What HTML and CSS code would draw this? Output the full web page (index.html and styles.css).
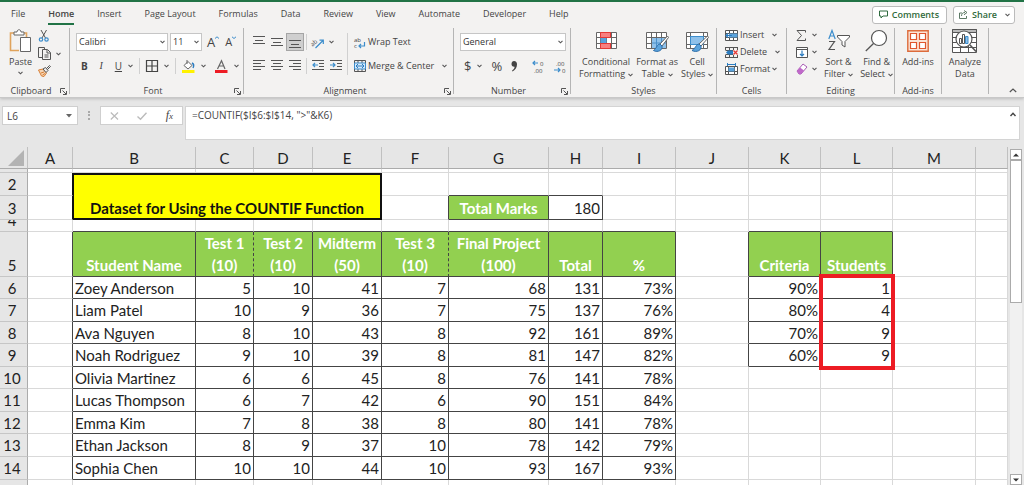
FILE: index.html
```html
<!DOCTYPE html>
<html lang="en">
<head>
<meta charset="utf-8">
<title>Spreadsheet - COUNTIF dataset</title>
<link rel="stylesheet" href="styles.css">
</head>
<body>
<svg class="defs" width="0" height="0" aria-hidden="true">
  <symbol id="chev" viewBox="0 0 5 4"><path d="M.5 .8L2.500 2.800L4.500 .8" fill="none" stroke="#555" stroke-width="1.100"/></symbol>
  <symbol id="launch" viewBox="0 0 7 7"><path d="M.5 5V.5H5M2.500 2.500L6 6M6.500 3V6.500H3" fill="none" stroke="#555"/></symbol>
</svg>

<header class="ribbon">
  <nav class="tabs">
    <button class="tab">File</button>
    <button class="tab active">Home</button>
    <button class="tab">Insert</button>
    <button class="tab">Page Layout</button>
    <button class="tab">Formulas</button>
    <button class="tab">Data</button>
    <button class="tab">Review</button>
    <button class="tab">View</button>
    <button class="tab">Automate</button>
    <button class="tab">Developer</button>
    <button class="tab">Help</button>
    <span class="grow"></span>
    <button class="pill"><svg width="9" height="9" viewBox="0 0 9 9"><path d="M.5 1H8.500V6H4L2 8V6H.5Z" fill="none" stroke="#2f6b3f"/></svg>Comments</button>
    <button class="pill share"><svg width="9" height="9" viewBox="0 0 9 9"><path d="M3 3H.5V8.500H7.500V6M2.500 6C2.500 3.500 4 2.500 6 2.500M5 .5L8 2.500L5 4.800" fill="none" stroke="#4c6b55" stroke-width=".9"/></svg>Share<svg class="chev"><use href="#chev"/></svg></button>
  </nav>

  <div class="groups">
    <section class="group clipboard">
      <div class="body">
        <button class="big paste">
          <svg width="22" height="24" viewBox="0 0 22 24"><path d="M6 4H1.500V21.500H10M15 4H17.500V8" fill="none" stroke="#e0a35c" stroke-width="1.600"/><path d="M5 6V3H8C8 0 12 0 12 3H15V6Z" fill="#fff" stroke="#666"/><path d="M11.500 8.500H21.500V22.500H11.500Z" fill="#fff" stroke="#666"/></svg>
          <span>Paste</span><svg class="chev"><use href="#chev"/></svg>
        </button>
        <div class="stack">
          <button aria-label="Cut"><svg width="12" height="12" viewBox="0 0 12 12"><path d="M3 0L7.500 8M8.500 0L4 8" stroke="#555" fill="none"/><circle cx="3" cy="9.500" r="1.700" fill="none" stroke="#3c8dcc" stroke-width="1.200"/><circle cx="8.500" cy="9.500" r="1.700" fill="none" stroke="#3c8dcc" stroke-width="1.200"/></svg></button>
          <button aria-label="Copy"><svg width="14" height="13" viewBox="0 0 14 13"><path d="M4 10.500H.5V.5H6.500V2M4.500 2.500H9.500L12.500 5.500V12.500H4.500ZM9 3V6H12M6.500 8H10.500M6.500 10H10.500" fill="none" stroke="#555"/></svg><svg class="chev"><use href="#chev"/></svg></button>
          <button aria-label="Format painter"><svg width="13" height="12" viewBox="0 0 13 12"><path d="M.5 5L5 4L8.500 8L6 11.500L3.500 11Z" fill="#f5d5b5" stroke="#d98035"/><path d="M3 8L6 7M4.500 10L7 8.500" stroke="#d98035"/><path d="M5 4L7.500 2.500L10 5.500L8 7.500ZM8.500 3.500L11.500 .5L12.500 1.500L9.500 4.500" fill="#eee" stroke="#555"/></svg></button>
        </div>
      </div>
      <footer><span>Clipboard</span><svg class="launch"><use href="#launch"/></svg></footer>
    </section>

    <section class="group font">
      <div class="body rows">
        <div class="row r1">
          <label class="drop face"><select aria-label="Font"><option>Calibri</option></select><svg class="chev"><use href="#chev"/></svg></label>
          <label class="drop size"><select aria-label="Font size"><option>11</option></select><svg class="chev"><use href="#chev"/></svg></label>
          <button class="letter" aria-label="Increase font size">A<svg width="4" height="9" viewBox="0 0 4 9"><path d="M0 2.500L2 .8L4 2.500" fill="none" stroke="#3c8dcc"/></svg></button>
          <button class="letter less" aria-label="Decrease font size">A<svg width="4" height="9" viewBox="0 0 4 9"><path d="M0 .8L2 2.500L4 .8" fill="none" stroke="#3c8dcc"/></svg></button>
        </div>
        <div class="row r2">
          <button class="mark"><b>B</b></button>
          <button class="mark"><i>I</i></button>
          <button class="mark"><u>U</u><svg class="chev"><use href="#chev"/></svg></button>
          <span class="sep"></span>
          <button aria-label="Borders"><svg width="12" height="12" viewBox="0 0 12 12"><path d="M.5 .5H11.500V11.500H.5ZM6 0V12M0 6H12" fill="none" stroke="#444" stroke-width="1.200"/></svg><svg class="chev"><use href="#chev"/></svg></button>
          <span class="sep"></span>
          <button aria-label="Fill color"><svg width="13" height="13" viewBox="0 0 13 13"><path d="M2 5.500L6 1.500L10 5.500L6 9Z" fill="#fff" stroke="#666"/><path d="M5 0V4" stroke="#666"/><path d="M10 3C12 4 12 6 11 8" fill="none" stroke="#2b7cc0" stroke-width="1.400"/><path d="M0 10H12.500V13H0Z" fill="#fff200"/></svg><svg class="chev"><use href="#chev"/></svg></button>
          <button aria-label="Font color"><svg width="13" height="13" viewBox="0 0 13 13"><path d="M2.500 9L6.500 .8L10 9M4 6H9" fill="none" stroke="#666" stroke-width="1.200"/><path d="M0 10H12.500V13H0Z" fill="#ed1c24"/></svg><svg class="chev"><use href="#chev"/></svg></button>
        </div>
      </div>
      <footer><span>Font</span><svg class="launch"><use href="#launch"/></svg></footer>
    </section>

    <section class="group align">
      <div class="body">
        <div class="rows">
          <div class="row r1">
            <button aria-label="Top align"><svg width="12" height="12" viewBox="0 0 12 12"><path d="M0 .5H12M2 4.500H10M0 7.500H12" stroke="#555"/></svg></button>
            <button aria-label="Middle align"><svg width="12" height="12" viewBox="0 0 12 12"><path d="M0 2.500H12M2 6.500H10M0 9.500H12" stroke="#555"/></svg></button>
            <button class="pressed" aria-label="Bottom align"><svg width="12" height="12" viewBox="0 0 12 12"><path d="M0 4.500H12M2 8.500H10M0 11.500H12" stroke="#555"/></svg></button>
            <span class="sep"></span>
            <button aria-label="Orientation"><svg width="13" height="13" viewBox="0 0 13 13"><text x="-2" y="8" class="tiny" transform="rotate(-40 3 6)">ab</text><path d="M3.500 12L11 4.500M7.500 4.200H11.300V8" fill="none" stroke="#3c8dcc" stroke-width="1.200"/></svg><svg class="chev"><use href="#chev"/></svg></button>
          </div>
          <div class="row r2">
            <button aria-label="Align left"><svg width="12" height="12" viewBox="0 0 12 12"><path d="M0 .5H12M0 3.500H8M0 6.500H12M0 9.500H8" stroke="#555"/></svg></button>
            <button aria-label="Center"><svg width="12" height="12" viewBox="0 0 12 12"><path d="M0 .5H12M2 3.500H10M0 6.500H12M2 9.500H10" stroke="#555"/></svg></button>
            <button aria-label="Align right"><svg width="12" height="12" viewBox="0 0 12 12"><path d="M0 .5H12M4 3.500H12M0 6.500H12M4 9.500H12" stroke="#555"/></svg></button>
            <span class="sep"></span>
            <button aria-label="Decrease indent"><svg width="12" height="12" viewBox="0 0 12 12"><path d="M0 .5H12M7 3.500H12M7 6.500H12M0 9.500H12" stroke="#555"/><path d="M6 5H1M3 3L1 5L3 7" fill="none" stroke="#3c8dcc" stroke-width="1.200"/></svg></button>
            <button aria-label="Increase indent"><svg width="12" height="12" viewBox="0 0 12 12"><path d="M0 .5H12M7 3.500H12M7 6.500H12M0 9.500H12" stroke="#555"/><path d="M0 5H5M3 3L5 5L3 7" fill="none" stroke="#3c8dcc" stroke-width="1.200"/></svg></button>
          </div>
        </div>
        <span class="sep tall"></span>
        <div class="rows">
          <div class="row r1"><button class="text"><svg width="12" height="13" viewBox="0 0 12 13"><text x="0" y="6" class="tiny">ab</text><text x="0" y="12" class="tiny">c</text><path d="M10.500 6V10H5M7 8L5 10L7 12" fill="none" stroke="#3c8dcc" stroke-width="1.200"/></svg>Wrap Text</button></div>
          <div class="row r2"><button class="text"><svg width="12" height="12" viewBox="0 0 12 12"><path d="M.5 .5H11.500V11.500H.5ZM4 0V3M8 0V3M4 9V12M8 9V12" fill="none" stroke="#555"/><path d="M.5 3H11.500V9H.5Z" fill="#d7eafa" stroke="#3c8dcc"/><path d="M2 6H10M4 4L2 6L4 8M8 4L10 6L8 8" fill="none" stroke="#2b7cc0"/></svg>Merge &amp; Center<svg class="chev far"><use href="#chev"/></svg></button></div>
        </div>
      </div>
      <footer><span>Alignment</span><svg class="launch"><use href="#launch"/></svg></footer>
    </section>

    <section class="group number">
      <div class="body rows">
        <div class="row r1"><label class="drop"><select aria-label="Number format"><option>General</option></select><svg class="chev"><use href="#chev"/></svg></label></div>
        <div class="row r2">
          <button class="sign">$<svg class="chev far"><use href="#chev"/></svg></button>
          <button class="sign">%</button>
          <button aria-label="Comma style"><svg width="7" height="11" viewBox="0 0 7 11"><path d="M3 0C5 0 6 1.500 6 3.500C6 7 4 9 1.500 10.500L1 9.800C2.500 8.500 3.500 7.500 3.600 5.800C1.500 6 .5 4.500 .5 3C.5 1.200 1.600 0 3 0Z" fill="#444"/></svg></button>
          <span class="sep"></span>
          <button aria-label="Increase decimal"><svg width="13" height="13" viewBox="0 0 13 13"><path d="M6 3H1M3 1L1 3L3 5" fill="none" stroke="#3c8dcc" stroke-width="1.200"/><text x="8" y="6" class="tiny">0</text><text x="2" y="13" class="tiny">.00</text></svg></button>
          <button aria-label="Decrease decimal"><svg width="13" height="13" viewBox="0 0 13 13"><path d="M0 10H6M4 8L6 10L4 12" fill="none" stroke="#3c8dcc" stroke-width="1.200"/><text x="2" y="6" class="tiny">.00</text><text x="8" y="13" class="tiny">0</text></svg></button>
        </div>
      </div>
      <footer><span>Number</span><svg class="launch"><use href="#launch"/></svg></footer>
    </section>

    <section class="group styles">
      <div class="body">
        <button class="big">
          <svg width="21" height="24" viewBox="0 0 21 24"><path d="M.5 3.500H20.500V19.500H.5ZM.5 8.500H20.500M.5 14.500H20.500M4.500 3V20M10.500 3V20M15.500 3V20" fill="#fff" stroke="#666"/><path d="M4.500 3.500H14.500V8.500H4.500ZM4.500 14.500H14.500V19.500H4.500Z" fill="#f98080" stroke="#e53935"/><path d="M4.500 9H10.500V14H4.500Z" fill="#5ba3dc"/></svg>
          <span>Conditional</span><span>Formatting <svg class="chev"><use href="#chev"/></svg></span>
        </button>
        <button class="big">
          <svg width="23" height="24" viewBox="0 0 23 24"><path d="M.5 3.500H20.500V19.500H.5ZM.5 8.500H20.500M.5 14.500H20.500M5.500 3V20M10.500 3V20M15.500 3V20" fill="#fff" stroke="#666"/><path d="M6 9H20V19H6Z" fill="#8fc1ea"/><path d="M10.500 9V19M15.500 9V19M6 14H20" stroke="#4a8fc8"/><path d="M21.500 7L14 15L16 17L22.500 8.500Z" fill="#fff" stroke="#666"/><path d="M14 15C11 15 11 19 7.500 21.500C12 24 17 21 16 17Z" fill="#5ba3dc" stroke="#2b6ca8"/></svg>
          <span>Format as</span><span>Table <svg class="chev"><use href="#chev"/></svg></span>
        </button>
        <button class="big">
          <svg width="23" height="24" viewBox="0 0 23 24"><path d="M.5 3.500H21.500V19.500H.5ZM.5 7.500H21.500M.5 15.500H21.500M4.500 3V20M17.500 3V20" fill="#fff" stroke="#666"/><path d="M4.500 7.500H17.500V15.500H4.500Z" fill="#8fc1ea" stroke="#3c8dcc"/><path d="M21.500 7L13 15L15 17L22.500 8.500Z" fill="#fff" stroke="#666"/><path d="M13 15C10 15 10 19 6 21.500C11 24 16 21 15 17Z" fill="#5ba3dc" stroke="#2b6ca8"/></svg>
          <span>Cell</span><span>Styles <svg class="chev"><use href="#chev"/></svg></span>
        </button>
      </div>
      <footer><span>Styles</span></footer>
    </section>

    <section class="group cells">
      <div class="body lines">
        <button class="text"><svg width="13" height="11" viewBox="0 0 13 11"><path d="M.5 .5H12.500V10.500H.5ZM.5 3.500H12.500M.5 7.500H12.500M4.500 0V11M8.500 0V11" fill="#fff" stroke="#555"/><path d="M4 3.500H12.500V7.500H4Z" fill="#5ba3dc"/><path d="M7 5.500H1M3 3.500L1 5.500L3 7.500" fill="none" stroke="#2b7cc0" stroke-width="1.200"/></svg>Insert<svg class="chev far"><use href="#chev"/></svg></button>
        <button class="text"><svg width="13" height="11" viewBox="0 0 13 11"><path d="M.5 .5H12.500M.5 10.500H12.500M.5 3.500H8M.5 7.500H8M.5 0V3M4.500 0V3M8.500 0V3M12.500 0V3M4.500 8V11M8.500 8V11M12.500 8V11M.5 8V11" fill="none" stroke="#555"/><path d="M3 3.500H8V7.500H3L1 5.500Z" fill="#2b7cc0"/><path d="M8.500 3.500L12.500 7.500M12.500 3.500L8.500 7.500" stroke="#e53935" stroke-width="1.300"/></svg>Delete<svg class="chev far"><use href="#chev"/></svg></button>
        <button class="text"><svg width="13" height="12" viewBox="0 0 13 12"><path d="M.5 3.500H12.500V11.500H.5ZM.5 8.500H12.500M3.500 3V12M9.500 3V12" fill="#fff" stroke="#555"/><path d="M3.500 4.500H9.500V8.500H3.500Z" fill="#5ba3dc"/><path d="M2.500 1.500H10.500M2.500 0V3M10.500 0V3" stroke="#2b7cc0" fill="none"/></svg>Format<svg class="chev"><use href="#chev"/></svg></button>
      </div>
      <footer><span>Cells</span></footer>
    </section>

    <section class="group editing">
      <div class="body">
        <div class="lines">
          <button aria-label="AutoSum"><svg width="12" height="11" viewBox="0 0 12 11"><path d="M9.500 2.500V.5H1L5.500 5.500L1 10.500H9.500V8.500" fill="none" stroke="#555"/></svg><svg class="chev"><use href="#chev"/></svg></button>
          <button aria-label="Fill"><svg width="12" height="11" viewBox="0 0 12 11"><path d="M.5 .5H11.500V10.500H.5ZM.5 2.500H11.500" fill="#fff" stroke="#555"/><path d="M6 3.500V9M4 7L6 9L8 7" fill="none" stroke="#2b7cc0" stroke-width="1.200"/></svg><svg class="chev"><use href="#chev"/></svg></button>
          <button aria-label="Clear"><svg width="12" height="12" viewBox="0 0 12 12"><path d="M1 8L7 1L11 4L5 11H3Z" fill="#fff" stroke="#a85ab4"/><path d="M1 8L4 4.500L8 7.500L5 11H3Z" fill="#bf68c9"/></svg><svg class="chev"><use href="#chev"/></svg></button>
        </div>
        <button class="big">
          <svg width="22" height="24" viewBox="0 0 22 24"><path d="M.8 10L4 1.500L7.200 10M2 7H6" fill="none" stroke="#3c8dcc" stroke-width="1.200"/><path d="M1 12.500H6.500L1 20.500H7" fill="none" stroke="#555" stroke-width="1.200"/><path d="M9.500 6.500H21.500V8L17 12.500V18L14 16V12.500L9.500 8Z" fill="#fff" stroke="#555"/></svg>
          <span>Sort &amp;</span><span>Filter <svg class="chev"><use href="#chev"/></svg></span>
        </button>
        <button class="big">
          <svg width="23" height="24" viewBox="0 0 23 24"><circle cx="14" cy="9" r="7.500" fill="#fff" stroke="#555" stroke-width="1.200"/><path d="M8.500 14.500L.8 22" stroke="#555" stroke-width="1.300"/></svg>
          <span>Find &amp;</span><span>Select <svg class="chev"><use href="#chev"/></svg></span>
        </button>
      </div>
      <footer><span>Editing</span></footer>
    </section>

    <section class="group single">
      <div class="body">
        <button class="big">
          <svg width="22" height="24" viewBox="0 0 22 24"><path d="M.8 1.800H21.200V22.200H.8Z" fill="#fbe4d6" stroke="#dd6b3b" stroke-width="1.400"/><path d="M3.500 4.500H9.500V10.500H3.500ZM12.500 4.500H18.500V10.500H12.500ZM3.500 13.500H9.500V19.500H3.500ZM12.500 13.500H18.500V19.500H12.500Z" fill="#fff" stroke="#e0562d" stroke-width="1.200"/></svg>
          <span>Add-ins</span>
        </button>
      </div>
      <footer><span>Add-ins</span></footer>
    </section>

    <section class="group single">
      <div class="body">
        <button class="big">
          <svg width="25" height="24" viewBox="0 0 25 24"><path d="M.5 .5H24.500V23.500H.5ZM.5 8.500H24.500M.5 13.500H24.500M.5 18.500H24.500M8.500 13V24M16.500 13V24" fill="#fff" stroke="#555"/><path d="M.5 .5H24.500V3.500H.5Z" fill="#bbb" stroke="#555"/><circle cx="12" cy="10" r="8" fill="#fff" stroke="#555" stroke-width="1.200"/><path d="M18 16L24 22.500" stroke="#555" stroke-width="1.600"/><path d="M7.500 9.500H9.500V14.500H7.500ZM10.500 5.500H12.500V14.500H10.500Z" fill="#fff" stroke="#555"/><path d="M13.500 7.500H16V14.500H13.500Z" fill="#8fc1ea" stroke="#3c8dcc"/></svg>
          <span>Analyze</span><span>Data</span>
        </button>
      </div>
      <footer></footer>
    </section>
    <span class="grow"></span>
    <button class="collapse" aria-label="Collapse ribbon"><svg width="8" height="5" viewBox="0 0 8 5"><path d="M.8 4L4 1L7.200 4" fill="none" stroke="#555" stroke-width="1.200"/></svg></button>
  </div>
</header>

<div class="formula-bar">
  <label class="name-box"><input type="text" value="L6" aria-label="Name box"><svg width="6" height="4" viewBox="0 0 6 4"><path d="M0 0H6L3 3.500Z" fill="#666"/></svg></label>
  <span class="dots"></span>
  <div class="fx">
    <button aria-label="Cancel"><svg width="9" height="8" viewBox="0 0 9 8"><path d="M.8 .5L8 7.500M8 .5L.8 7.500" stroke="#bbb" stroke-width="1.200"/></svg></button>
    <button aria-label="Enter"><svg width="10" height="8" viewBox="0 0 10 8"><path d="M.5 4.500L3.500 7.200L9.500 .8" fill="none" stroke="#bbb" stroke-width="1.400"/></svg></button>
    <button class="fn" aria-label="Insert function"><i>f<small>x</small></i></button>
  </div>
  <div class="formula"><input type="text" value="=COUNTIF($I$6:$I$14, &quot;&gt;&quot;&amp;K6)" aria-label="Formula"><svg width="6" height="5" viewBox="0 0 6 5"><path d="M.5 4L3 1.200L5.500 4" fill="none" stroke="#444" stroke-width="1.400"/></svg></div>
</div>

<main class="workspace">
  <div class="sheet">
    <table class="grid">
      <colgroup><col class="w0"><col class="wa"><col class="wb"><col class="wc"><col class="wd"><col class="we"><col class="wf"><col class="wg"><col class="wh"><col class="wi"><col class="wi"><col class="wk"><col class="wk"><col class="wm"><col></colgroup>
      <thead>
        <tr class="even"><th class="corner"><svg width="16" height="16" viewBox="0 0 16 16"><path d="M16 0V16H0Z" fill="#b3b3b3"/></svg></th><th>A</th><th>B</th><th>C</th><th>D</th><th>E</th><th>F</th><th>G</th><th>H</th><th>I</th><th>J</th><th>K</th><th>L</th><th>M</th><th></th></tr>
      </thead>
      <tbody>
        <tr class="sliver"><th></th><td></td><td></td><td></td><td></td><td></td><td></td><td></td><td></td><td></td><td></td><td></td><td></td><td></td><td></td></tr>
        <tr class="odd"><th>2</th><td class="title-edge"></td><td class="title" colspan="4" rowspan="2">Dataset for Using the COUNTIF Function</td><td></td><td class="eb"></td><td class="eb"></td><td></td><td></td><td></td><td></td><td></td><td></td></tr>
        <tr class="tall3"><th>3</th><td class="title-edge"></td><td class="er"></td><td class="h">Total Marks</td><td class="n">180</td><td></td><td></td><td></td><td></td><td></td><td></td></tr>
        <tr class="short"><th><div>4</div></th><td></td><td class="eb"></td><td class="eb"></td><td class="eb"></td><td class="eb"></td><td class="eb"></td><td class="eb"></td><td class="eb"></td><td class="eb"></td><td></td><td class="eb"></td><td class="eb"></td><td></td><td></td></tr>
        <tr class="head"><th>5</th><td class="er"></td><td class="h">Student Name</td><td class="h dash">Test 1<br>(10)</td><td class="h">Test 2<br>(10)</td><td class="h">Midterm<br>(50)</td><td class="h dash">Test 3<br>(10)</td><td class="h">Final Project<br>(100)</td><td class="h">Total</td><td class="h">%</td><td class="er"></td><td class="h">Criteria</td><td class="h">Students</td><td></td><td></td></tr>
        <tr class="even"><th>6</th><td class="er"></td><td class="s">Zoey Anderson</td><td class="n">5</td><td class="n">10</td><td class="n">41</td><td class="n">7</td><td class="n">68</td><td class="n">131</td><td class="n">73%</td><td class="er"></td><td class="n">90%</td><td class="n marked">1<span class="highlight"></span></td><td></td><td></td></tr>
        <tr class="odd"><th>7</th><td class="er"></td><td class="s">Liam Patel</td><td class="n">10</td><td class="n">9</td><td class="n">36</td><td class="n">7</td><td class="n">75</td><td class="n">137</td><td class="n">76%</td><td class="er"></td><td class="n">80%</td><td class="n">4</td><td></td><td></td></tr>
        <tr class="even"><th>8</th><td class="er"></td><td class="s">Ava Nguyen</td><td class="n">8</td><td class="n">10</td><td class="n">43</td><td class="n">8</td><td class="n">92</td><td class="n">161</td><td class="n">89%</td><td class="er"></td><td class="n">70%</td><td class="n">9</td><td></td><td></td></tr>
        <tr class="odd"><th>9</th><td class="er"></td><td class="s">Noah Rodriguez</td><td class="n">9</td><td class="n">10</td><td class="n">39</td><td class="n">8</td><td class="n">81</td><td class="n">147</td><td class="n">82%</td><td class="er"></td><td class="n">60%</td><td class="n">9</td><td></td><td></td></tr>
        <tr class="even"><th>10</th><td class="er"></td><td class="s">Olivia Martinez</td><td class="n">6</td><td class="n">6</td><td class="n">45</td><td class="n">8</td><td class="n">76</td><td class="n">141</td><td class="n">78%</td><td></td><td></td><td></td><td></td><td></td></tr>
        <tr class="odd"><th>11</th><td class="er"></td><td class="s">Lucas Thompson</td><td class="n">6</td><td class="n">7</td><td class="n">42</td><td class="n">6</td><td class="n">90</td><td class="n">151</td><td class="n">84%</td><td></td><td></td><td></td><td></td><td></td></tr>
        <tr class="even"><th>12</th><td class="er"></td><td class="s">Emma Kim</td><td class="n">7</td><td class="n">8</td><td class="n">38</td><td class="n">8</td><td class="n">80</td><td class="n">141</td><td class="n">78%</td><td></td><td></td><td></td><td></td><td></td></tr>
        <tr class="odd"><th>13</th><td class="er"></td><td class="s">Ethan Jackson</td><td class="n">8</td><td class="n">9</td><td class="n">37</td><td class="n">10</td><td class="n">78</td><td class="n">142</td><td class="n">79%</td><td></td><td></td><td></td><td></td><td></td></tr>
        <tr class="odd"><th>14</th><td class="er"></td><td class="s">Sophia Chen</td><td class="n">10</td><td class="n">10</td><td class="n">44</td><td class="n">10</td><td class="n">93</td><td class="n">167</td><td class="n">93%</td><td></td><td></td><td></td><td></td><td></td></tr>
        <tr class="odd"><th></th><td></td><td></td><td></td><td></td><td></td><td></td><td></td><td></td><td></td><td></td><td></td><td></td><td></td><td></td></tr>
      </tbody>
    </table>
  </div>
  <div class="scroll">
    <button aria-label="Scroll up"><svg width="6" height="4" viewBox="0 0 6 4"><path d="M0 3.500H6L3 .5Z" fill="#333"/></svg></button>
    <div class="thumb"></div>
    <span class="grow"></span>
    <button aria-label="Scroll down"><svg width="6" height="4" viewBox="0 0 6 4"><path d="M0 .5H6L3 3.500Z" fill="#333"/></svg></button>
  </div>
</main>
</body>
</html>
```
FILE: styles.css
```css
* { box-sizing: border-box; }
body {
  margin: 0;
  height: 100vh;
  display: flex;
  flex-direction: column;
  overflow: hidden;
  background: #e6e6e6;
  color: #444;
  font: 9px/12px "Open Sans", "Noto Sans", sans-serif;
}
button {
  display: flex;
  align-items: center;
  margin: 0;
  padding: 0;
  border: 0;
  background: none;
  color: inherit;
  font: inherit;
  white-space: nowrap;
}
svg { display: block; flex: none; overflow: visible; }
.defs { position: absolute; }
.grow { flex: 1; }
.chev { width: 5px; height: 4px; }
.tiny { font: 6px "Open Sans", sans-serif; fill: #444; }

/* Ribbon */
.ribbon {
  background: #f3f2f1;
  border-top: 2px solid #217346;
  border-bottom: 1px solid #c8c8c8;
  box-shadow: 0 1px 3px #bbb;
}
.tabs {
  display: flex;
  align-items: center;
  gap: 23px;
  height: 25px;
  padding: 0 9px 0 11px;
}
.tab { height: 20px; border-bottom: 2px solid transparent; }
.tab.active { border-color: #217346; font-weight: 600; }
.pill {
  height: 18px;
  gap: 4px;
  padding: 0 7px 0 6px;
  border: 1px solid #bbb;
  border-radius: 3px;
  background: #fff;
  color: #316b3b;
  font-weight: 600;
}
.pill.share { margin-left: -17px; padding: 0 4px 0 5px; }
.share .chev { margin-left: 4px; }
.groups { display: flex; height: 70px; }
.group {
  display: flex;
  flex-direction: column;
  justify-content: space-between;
  height: 66px;
  margin-top: 1px;
  border-right: 1px solid #b5b5b5;
}
.group footer {
  display: flex;
  align-items: center;
  height: 12px;
  margin: 0 2px -3px;
  text-align: center;
  white-space: nowrap;
}
.group footer span { flex: 1; }
.launch { width: 7px; height: 7px; }
.body { display: flex; }
.rows { display: flex; flex-direction: column; gap: 6px; }
.row { display: flex; align-items: center; height: 18px; }
.big { flex-direction: column; padding-top: 1px; }
.big span { display: flex; align-items: center; gap: 3px; line-height: 12px; }
.big > svg:first-child { margin-bottom: 3px; }
.big .chev { margin-top: 1px; }
.sep { width: 1px; height: 16px; background: #d0d0d0; }
.text { gap: 2px; }

.clipboard { width: 70px; }
.clipboard .body { padding-left: 9px; gap: 6px; }
.paste .chev { margin-top: 3px; }
.stack { display: flex; flex-direction: column; gap: 5px; padding-top: 2px; }
.stack button { gap: 4px; }

.drop { display: grid; align-items: center; }
.drop select {
  grid-area: 1 / 1;
  width: 100%;
  height: 18px;
  padding: 0 2px;
  border: 1px solid #c6c6c6;
  border-radius: 0;
  background: #fff;
  color: #333;
  appearance: none;
  font: inherit;
}
.drop .chev { grid-area: 1 / 1; justify-self: end; margin-right: 3px; }
.font { width: 174px; }
.font .body, .align .body, .number .body { padding-top: 5px; }
.font .body { padding-left: 6px; }
.face { width: 92px; margin-right: 2px; }
.size { width: 32px; margin-right: 5px; }
.letter { align-items: flex-start; font-size: 13px; margin-right: 6px; }
.letter.less { font-size: 11px; }
.font .r2 { gap: 9px; padding-left: 5px; }
.font .r2 button { gap: 6px; }
.mark { font-size: 10px; }
.mark i { font-family: "Liberation Serif", serif; width: 9px; text-align: center; }
.font .sep { margin: 0 -3px; }

.align { width: 210px; }
.align .body { padding-left: 9px; }
.align .r1, .align .r2 { gap: 6px; }
.align .pressed { margin: 0 -3px; padding: 2px; border: 1px solid #a5a5a5; background: #cfcfcf; }
.align .sep { margin: 0 -1px; }
.align .r1 .chev { margin-left: 4px; }
.align .sep.tall { height: 42px; margin: 0 6px 0 5px; }
.chev.far { margin-left: 6px; }

.number { width: 117px; }
.number .body { padding-left: 6px; padding-right: 4px; }
.number .drop { flex: 1; }
.number .r2 { padding-left: 4px; gap: 9px; }
.number .sep { margin: 0 -2px; }
.sign { font-size: 13px; }

.styles { width: 146px; }
.styles .body { padding-left: 8px; gap: 3px; }

.cells { width: 70px; }
.lines { display: flex; flex-direction: column; gap: 5px; padding-top: 1px; }
.lines button { height: 12px; }
.cells .body { padding-left: 8px; }
.editing { width: 108px; }
.editing .body { padding-left: 9px; gap: 7px; }
.editing .lines button { gap: 4px; }
.single { width: 47px; }
.single .body { justify-content: center; }
.collapse { align-self: flex-end; padding: 0 7px 4px 0; }

/* Formula bar */
.formula-bar { display: flex; align-items: flex-start; padding: 8px 4px 7px 2px; }
.name-box, .fx {
  display: flex;
  align-items: center;
  height: 19px;
  border: 1px solid #cfcfcf;
  background: #fff;
}
.name-box { width: 76px; padding-right: 5px; }
.formula-bar input {
  flex: 1;
  min-width: 0;
  padding: 0 4px;
  border: 0;
  background: none;
  color: #444;
  font: 10px/16px "Open Sans", sans-serif;
}
.dots { width: 2px; height: 9px; margin: 5px 10px; border-left: 2px dotted #aaa; }
.fx { width: 83px; padding: 0 9px; justify-content: space-between; }
.fn { font: 12px "Liberation Serif", serif; }
.fn small { font-size: 9px; }
.formula {
  display: flex;
  flex: 1;
  align-items: flex-start;
  height: 34px;
  margin-left: 2px;
  padding: 0 3px 0 2px;
  border: 1px solid #d4d4d4;
  background: #fff;
}
.formula svg { margin-top: 5px; }

/* Sheet */
.workspace { display: flex; flex: 1; min-height: 0; }
.sheet { flex: 1; min-width: 0; overflow: hidden; }
.grid {
  width: 100%;
  table-layout: fixed;
  border-collapse: separate;
  border-spacing: 0;
  background: #fff;
  color: #222;
  font: 15px/20px Lato, "Open Sans", sans-serif;
}
.w0 { width: 28px; } .wa { width: 45px; } .wb { width: 123px; } .wc { width: 58px; }
.wd { width: 59px; } .we { width: 69px; } .wf { width: 67px; } .wg { width: 100px; }
.wh { width: 54px; } .wi { width: 73px; } .wk { width: 72px; } .wm { width: 83px; }
.grid th, .grid td {
  padding: 0;
  border: solid #d9d9d9;
  border-width: 0 1px 1px 0;
  vertical-align: bottom;
  white-space: nowrap;
}
.grid th { background: #e6e6e6; font-weight: 400; text-align: center; }
.grid tbody th { border-right-color: #ababab; border-bottom-color: #c6c6c6; padding-right: 3px; }
.grid thead th { border-bottom-color: #ababab; border-right-color: #c0c0c0; }
.corner svg { margin: 0 0 2px 8px; }
.even { height: 22px; }
.odd { height: 23px; }
.grid .odd th, .grid .odd td, .grid .tall3 th, .grid .tall3 td { padding-bottom: 1px; }
.tall3 { height: 24px; }
.sliver { height: 4px; font-size: 1px; line-height: 1px; }
.short { height: 12px; }
.short div {
  display: flex;
  justify-content: center;
  align-items: flex-end;
  height: 7px;
  margin-bottom: 4px;
  overflow: hidden;
  line-height: 14px;
}
.head { height: 45px; line-height: 22px; }
.grid .er { border-right-color: #444; }
.grid .eb { border-bottom-color: #444; }
.grid .s, .grid .n, .grid .h { border-color: #444; }
.grid .s { padding-left: 2px; }
.grid .n { padding-right: 2px; text-align: right; }
.grid .h { background: #92d050; color: #fff; font-weight: 700; text-align: center; }
.grid .dash { border-right-style: dashed; }
.grid .title-edge { border-right-color: #111; }
.grid .title {
  border: 2px solid #111;
  border-left-width: 1px;
  background: #ff0;
  color: #111;
  font-weight: 700;
  text-align: center;
}
.grid .odd .title { padding-bottom: 0; }
.marked { position: relative; }
.highlight {
  position: absolute;
  top: -3px;
  left: -2px;
  right: -3px;
  height: 96px;
  border: 4px solid #ed1c24;
}
.scroll {
  display: flex;
  flex-direction: column;
  width: 12px;
  margin: 2px 2px 0 2px;
  background: #f1f1f1;
}
.scroll button {
  justify-content: center;
  height: 11px;
  border: 1px solid #ababab;
  background: #fff;
}
.thumb { flex: 0 1 143px; border: 1px solid #ababab; background: #fff; }
```
